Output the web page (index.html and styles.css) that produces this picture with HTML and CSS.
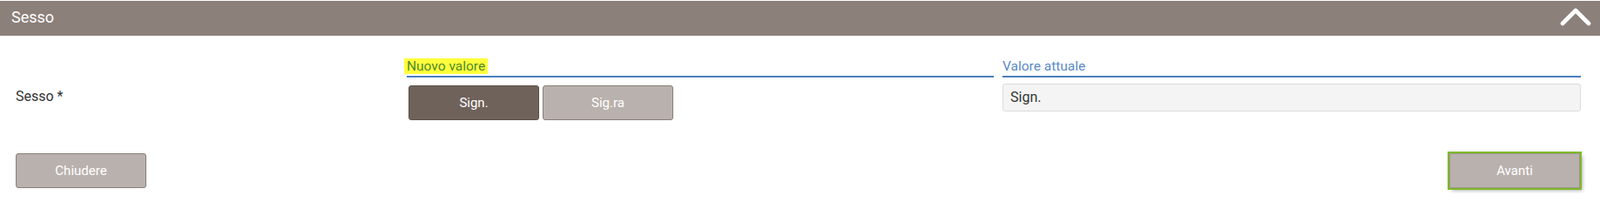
FILE: index.html
```html
<!DOCTYPE html>
<html lang="it">
<head>
<meta charset="utf-8">
<title>Sesso</title>
<link rel="stylesheet" href="styles.css">
</head>
<body>
<div class="panel">
  <div class="panel-header">
    <span class="panel-title">Sesso</span>
    <svg class="chevron" width="38" height="24" viewBox="0 0 38 24" aria-hidden="true">
      <polyline points="3,19 18,4 33,19" fill="none" stroke="#ffffff" stroke-width="4.6" stroke-linecap="round" stroke-linejoin="round"/>
    </svg>
  </div>
  <div class="form-row">
    <div class="field-name">Sesso *</div>
    <div class="field-col">
      <div class="col-label"><span class="highlight">Nuovo valore</span></div>
      <div class="choice-group">
        <button class="choice selected">Sign.</button>
        <button class="choice">Sig.ra</button>
      </div>
    </div>
    <div class="field-col">
      <div class="col-label">Valore attuale</div>
      <div class="current-value">Sign.</div>
    </div>
  </div>
  <div class="actions">
    <button class="btn">Chiudere</button>
    <button class="btn btn-focus">Avanti</button>
  </div>
</div>
</body>
</html>
```
FILE: styles.css
```css
* { box-sizing: border-box; }
html, body { margin: 0; padding: 0; background: #ffffff; }
body {
  font-family: Roboto, "Liberation Sans", Arial, sans-serif;
  color: #333333;
  width: 1837px;
  height: 222px;
  overflow: hidden;
}
.panel-header {
  margin-top: 1px;
  height: 40px;
  background: #8b807a;
  display: flex;
  align-items: center;
  justify-content: space-between;
  padding: 0 8px 0 13px;
}
.panel-title {
  color: #ffffff;
  font-size: 18px;
  line-height: 22px;
  margin-top: -2px;
}
.chevron { display: block; margin-top: -2px; }
.form-row {
  display: grid;
  grid-template-columns: 439px 674px 664px;
  column-gap: 10px;
  padding-left: 18px;
  margin-top: 26px;
}
.field-name {
  font-size: 16px;
  line-height: 20px;
  padding-top: 34px;
  color: #333333;
}
.col-label {
  font-size: 15.5px;
  line-height: 18px;
  color: #5b8ac6;
  border-bottom: 2px solid #4a80bd;
  padding-bottom: 2px;
}
.highlight {
  background: #ffff3c;
  color: #4e8a2c;
  padding: 0 3px;
  margin-left: -3px;
  display: inline-block;
}
.choice-group {
  display: flex;
  gap: 4px;
  margin-top: 9px;
  padding-left: 2px;
}
.choice {
  width: 150px;
  height: 40px;
  border: 1px solid #8a7f79;
  border-radius: 3px;
  background: #b9b1ad;
  color: #ffffff;
  font-family: Roboto, "Liberation Sans", Arial, sans-serif;
  font-size: 15px;
  padding: 0;
}
.choice.selected {
  background: #6e625b;
  border-color: #5e534d;
}
.current-value {
  margin-top: 7px;
  height: 32px;
  background: #f4f4f4;
  border: 1px solid #dcdcdc;
  border-radius: 3px;
  font-size: 16px;
  line-height: 30px;
  padding-left: 8px;
  color: #333333;
}
.actions {
  display: flex;
  justify-content: space-between;
  padding: 0 23px 0 18px;
  margin-top: 38px;
}
.btn {
  width: 150px;
  height: 40px;
  border: 1px solid #8a7f79;
  border-radius: 3px;
  background: #b9b1ad;
  color: #ffffff;
  font-family: Roboto, "Liberation Sans", Arial, sans-serif;
  font-size: 15px;
  padding: 0;
}
.btn-focus {
  outline: 2px solid #7dba28;
  outline-offset: 0;
  border-radius: 0;
  border-color: #9d938e;
  box-shadow: 3px 3px 4px rgba(0, 0, 0, 0.3);
}
```
